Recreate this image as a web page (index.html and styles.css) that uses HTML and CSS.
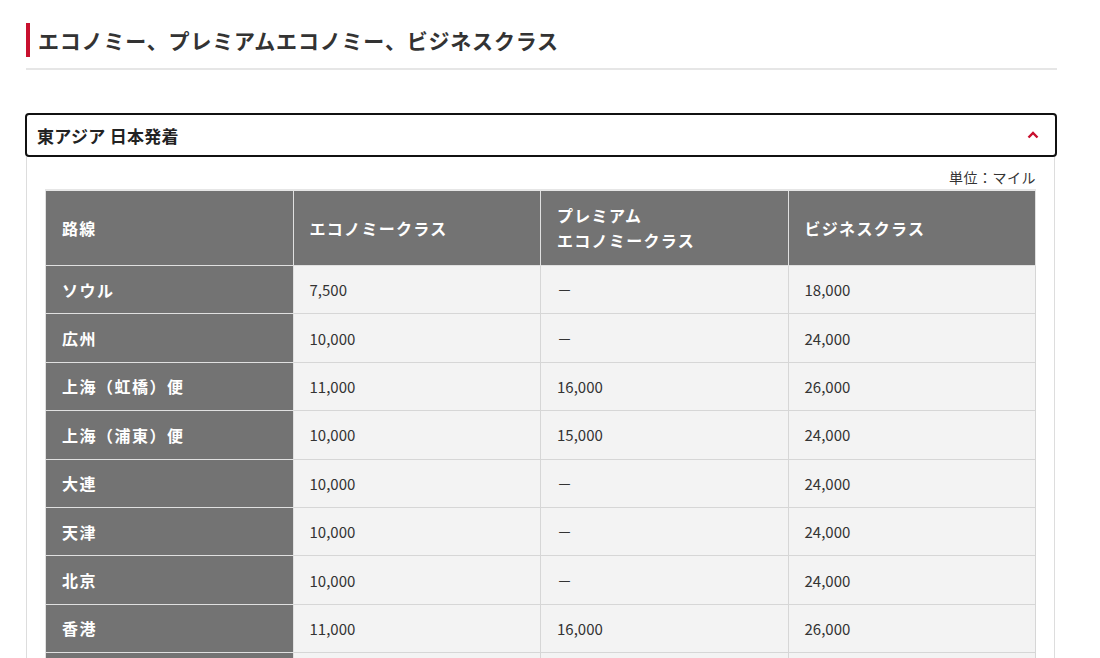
FILE: index.html
```html
<!DOCTYPE html>
<html lang="ja">
<head>
<meta charset="utf-8">
<link rel="stylesheet" href="styles.css">
</head>
<body>
<div class="wrap">
  <div class="title-wrap">
    <h2 class="title">エコノミー、プレミアムエコノミー、ビジネスクラス</h2>
  </div>
  <div class="acc">
    <div class="acc-head">
      <span class="acc-title">東アジア 日本発着</span>
      <svg class="caret" width="14" height="10" viewBox="0 0 14 10"><path d="M2.5 7.5 L7 3 L11.5 7.5" fill="none" stroke="#c8102e" stroke-width="2.4"/></svg>
    </div>
    <div class="acc-body">
      <div class="unit">単位：マイル</div>
      <table class="tbl">
        <thead>
          <tr><th>路線</th><th>エコノミークラス</th><th>プレミアム<br>エコノミークラス</th><th>ビジネスクラス</th></tr>
        </thead>
        <tbody>
          <tr><th>ソウル</th><td>7,500</td><td>－</td><td>18,000</td></tr>
          <tr><th>広州</th><td>10,000</td><td>－</td><td>24,000</td></tr>
          <tr><th>上海（虹橋）便</th><td>11,000</td><td>16,000</td><td>26,000</td></tr>
          <tr><th>上海（浦東）便</th><td>10,000</td><td>15,000</td><td>24,000</td></tr>
          <tr><th>大連</th><td>10,000</td><td>－</td><td>24,000</td></tr>
          <tr><th>天津</th><td>10,000</td><td>－</td><td>24,000</td></tr>
          <tr><th>北京</th><td>10,000</td><td>－</td><td>24,000</td></tr>
          <tr><th>香港</th><td>11,000</td><td>16,000</td><td>26,000</td></tr>
          <tr class="next"><th></th><td></td><td></td><td></td></tr>
        </tbody>
      </table>
    </div>
  </div>
</div>
</body>
</html>
```
FILE: styles.css
```css
html, body {
  margin: 0;
  padding: 0;
  background: #fff;
  font-family: "Noto Sans CJK JP", "Noto Sans", sans-serif;
  color: #333;
}
.wrap {
  width: 1032px;
  margin-left: 25px;
  padding-top: 23px;
}
.title-wrap {
  border-bottom: 2px solid #e6e6e6;
  padding-bottom: 11px;
  margin-left: 1px;
}
.title {
  margin: 0;
  font-size: 21px;
  font-weight: bold;
  letter-spacing: 0.8px;
  line-height: 34px;
  padding-left: 8px;
  border-left: 4px solid #c8102e;
  color: #333;
}
.acc {
  margin-top: 43px;
}
.acc-head {
  display: flex;
  align-items: center;
  justify-content: space-between;
  height: 40px;
  border: 2px solid #111;
  border-radius: 4px;
  padding: 0 15px 0 10px;
}
.acc-title {
  font-size: 17px;
  font-weight: bold;
  letter-spacing: 0.3px;
  color: #222;
}
.caret {
  display: block;
}
.acc-body {
  border-left: 1px solid #ddd;
  border-right: 1px solid #ddd;
  margin: 0 2px 0 1px;
  padding: 9px 18px 0 18px;
}
.unit {
  text-align: right;
  font-size: 14px;
  letter-spacing: 0.5px;
  line-height: 22px;
  color: #333;
  margin-bottom: 1px;
}
.tbl {
  width: 100%;
  border-collapse: collapse;
  table-layout: fixed;
  border-top: 2px solid #e6e6e6;
}
.tbl th, .tbl td {
  text-align: left;
  padding: 0 16px;
  height: 47.4px;
  border: 1px solid #d6d6d6;
}
.tbl thead th {
  height: 74px;
  background: #737373;
  color: #fff;
  font-size: 16px;
  font-weight: bold;
  letter-spacing: 1.3px;
  line-height: 25px;
  border: 1px solid #e0e0e0;
  border-top: none;
}
.tbl tbody th {
  background: #737373;
  color: #fff;
  font-size: 16px;
  font-weight: bold;
  letter-spacing: 1.5px;
  border-color: #e0e0e0;
}
.tbl td {
  background: #f3f3f3;
  font-size: 15px;
  color: #333;
}
```
